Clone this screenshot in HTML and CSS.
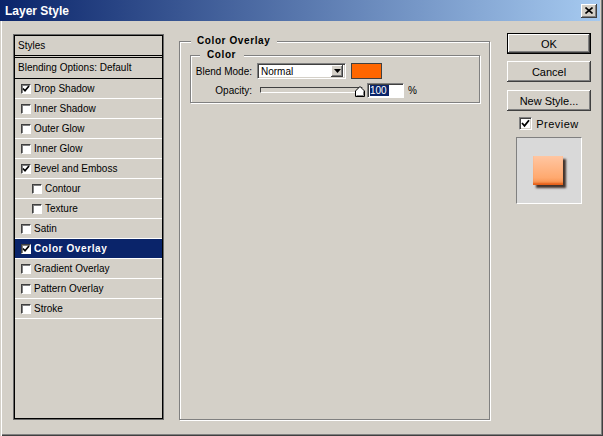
FILE: index.html
```html
<!DOCTYPE html>
<html lang="en">
<head>
    <meta charset="UTF-8">
    <title>Layer Style</title>
    <link rel="stylesheet" href="styles.css">
</head>
<body>
<div class="window">
    <div class="titlebar">
        <span class="title">Layer Style</span>
        <span class="close">
            <svg width="8" height="7" viewBox="0 0 8 7"><path d="M0.5 0.5 L7.5 6.5 M7.5 0.5 L0.5 6.5" stroke="#000" stroke-width="1.6"/></svg>
        </span>
    </div>
    <div class="content">
        <div class="styles-panel">
            <div class="panel-head">Styles</div>
            <div class="panel-blend">Blending Options: Default</div>
            <ul class="style-list">
                <li class="item"><span class="tick on"><svg width="8" height="8" viewBox="0 0 8 8"><path d="M1 3.5 L3 5.8 L7 1" fill="none" stroke="#000" stroke-width="1.7"/></svg></span>Drop Shadow</li>
                <li class="item"><span class="tick"></span>Inner Shadow</li>
                <li class="item"><span class="tick"></span>Outer Glow</li>
                <li class="item"><span class="tick"></span>Inner Glow</li>
                <li class="item"><span class="tick on"><svg width="8" height="8" viewBox="0 0 8 8"><path d="M1 3.5 L3 5.8 L7 1" fill="none" stroke="#000" stroke-width="1.7"/></svg></span>Bevel and Emboss</li>
                <li class="item sub"><span class="tick"></span>Contour</li>
                <li class="item sub"><span class="tick"></span>Texture</li>
                <li class="item"><span class="tick"></span>Satin</li>
                <li class="item active"><span class="tick on"><svg width="8" height="8" viewBox="0 0 8 8"><path d="M1 3.5 L3 5.8 L7 1" fill="none" stroke="#000" stroke-width="1.7"/></svg></span>Color Overlay</li>
                <li class="item"><span class="tick"></span>Gradient Overlay</li>
                <li class="item"><span class="tick"></span>Pattern Overlay</li>
                <li class="item"><span class="tick"></span>Stroke</li>
            </ul>
        </div>

        <div class="group outer">
            <span class="legend">Color Overlay</span>
            <div class="group inner">
                <span class="legend">Color</span>
                <div class="row">
                    <label class="field-label">Blend Mode:</label>
                    <div class="select">
                        <span class="select-value">Normal</span>
                        <span class="select-btn"><svg width="7" height="4" viewBox="0 0 7 4"><path d="M0 0 H7 L3.5 4 Z" fill="#000"/></svg></span>
                    </div>
                    <span class="swatch"></span>
                </div>
                <div class="row second">
                    <label class="field-label">Opacity:</label>
                    <div class="slider">
                        <span class="track"></span>
                        <svg class="thumb" width="10" height="11" viewBox="0 0 10 11"><path d="M0.5 10.5 V5 L5 0.5 L9.5 5 V10.5 Z" fill="#fff" stroke="#000"/><path d="M1.5 9.5 H8.5 V5.4" fill="none" stroke="#808080"/></svg>
                    </div>
                    <div class="number"><span class="sel">100</span></div>
                    <span class="unit">%</span>
                </div>
            </div>
        </div>

        <div class="actions">
            <div class="btn default"><span>OK</span></div>
            <div class="btn">Cancel</div>
            <div class="btn">New Style...</div>
            <div class="preview-row">
                <span class="box"><svg width="9" height="9" viewBox="0 0 9 9"><path d="M1 4 L3.5 6.8 L8 1.2" fill="none" stroke="#000" stroke-width="1.8"/></svg></span>
                <span>Preview</span>
            </div>
            <div class="preview">
                <span class="sample"></span>
            </div>
        </div>
    </div>
</div>
</body>
</html>
```

FILE: styles.css
```css
body { margin: 0; font-family: "Liberation Sans", Arial, sans-serif; background: #d4d0c8; color: #000; }
.window { width: 603px; height: 436px; box-sizing: border-box; background: #d4d0c8; box-shadow: inset 1px 0 #d4d0c8, inset 2px 0 #fff, inset -1px -1px #404040, inset -2px -2px #808080; }

.titlebar { height: 21px; width: 600px; box-sizing: border-box; padding: 0 3px 0 5px; display: flex; align-items: center; justify-content: space-between; background: linear-gradient(to right, #0a246a, #a6caf0); }
.title { color: #fff; font-weight: bold; font-size: 12px; }
.close { width: 16px; height: 14px; box-sizing: border-box; display: flex; align-items: center; justify-content: center; background: #d4d0c8; box-shadow: inset -1px -1px #404040, inset 1px 1px #fff, inset -2px -2px #808080; }

.content { display: flex; align-items: flex-start; padding: 12px 0 0 14px; }

/* styles list */
.styles-panel { width: 149px; height: 384px; margin-top: 2px; box-sizing: border-box; border: 1px solid #000; box-shadow: 0 0 0 1px #6b6b6b; font-size: 10px; }
.panel-head { height: 19px; line-height: 19px; padding-left: 3px; border-bottom: 1px solid #000; margin-bottom: 1px; }
.panel-blend { height: 20px; line-height: 20px; padding-left: 3px; border-top: 1px solid #000; border-bottom: 1px solid #000; }
.style-list { list-style: none; margin: 0; padding: 0; }
.item { height: 19px; border-bottom: 1px solid #fff; display: flex; align-items: center; padding-left: 6px; }
.item.sub { padding-left: 17px; }
.item.active { background: #0a246a; color: #fff; font-weight: bold; letter-spacing: 0.6px; }
.tick { width: 10px; height: 10px; box-sizing: border-box; margin-right: 3px; background: #fff; border-style: solid; border-width: 1px; border-color: #404040 #fff #fff #404040; box-shadow: inset 1px 1px #808080; display: flex; align-items: center; justify-content: center; }

/* etched groups */
.group { position: relative; box-sizing: border-box; border: 1px solid #808080; box-shadow: inset 1px 1px #fff, 1px 1px #fff; }
.outer { width: 311px; height: 379px; margin: 8px 0 0 16px; padding: 13px 0 0 10px; }
.inner { width: 290px; height: 48px; padding-top: 7px; }
.legend { position: absolute; top: -7px; left: 11px; padding: 0 7px 0 6px; line-height: 12px; background: #d4d0c8; font-size: 10px; font-weight: bold; letter-spacing: 0.6px; }
.inner .legend { left: 9px; padding: 0 8px 0 7px; }

.row { display: flex; align-items: center; height: 16px; font-size: 10px; }
.row.second { height: 15px; margin-top: 4px; }
.field-label { width: 61px; text-align: right; margin-right: 5px; }
.second .field-label { margin-right: 8px; }

.select { width: 89px; height: 16px; box-sizing: border-box; background: #fff; border: 1px solid; border-color: #808080 #fff #fff #808080; box-shadow: inset 1px 1px #404040, inset -1px -1px #d4d0c8; display: flex; align-items: center; justify-content: space-between; padding: 2px; }
.select-value { padding-left: 1px; }
.select-btn { width: 12px; height: 12px; box-sizing: border-box; background: #d4d0c8; box-shadow: inset -1px -1px #404040, inset 1px 1px #fff, inset -2px -2px #808080; display: flex; align-items: center; justify-content: center; }
.swatch { width: 31px; height: 16px; margin-left: 5px; box-sizing: border-box; border: 1px solid #404040; background: #ff6600; }

.slider { position: relative; width: 105px; height: 15px; }
.track { display: block; width: 103px; height: 6px; margin-top: 4px; box-sizing: border-box; border: 1px solid; border-color: #404040 #fff #fff #404040; background: #d4d0c8; }
.thumb { position: absolute; left: 95px; top: 3px; }
.number { width: 37px; height: 15px; margin-left: 2px; box-sizing: border-box; background: #fff; border: 1px solid; border-color: #808080 #fff #fff #808080; box-shadow: inset 1px 1px #404040; padding: 1px 0 0 2px; line-height: 12px; }
.sel { background: #0a246a; color: #fff; padding-right: 2px; }
.unit { margin-left: 4px; }

/* buttons */
.actions { width: 84px; margin-left: 17px; display: flex; flex-direction: column; align-items: center; font-size: 11px; }
.btn { width: 84px; height: 21px; box-sizing: border-box; display: flex; align-items: center; justify-content: center; background: #d4d0c8; box-shadow: inset -1px -1px #404040, inset 1px 1px #fff, inset -2px -2px #808080; margin-bottom: 7px; }
.btn + .btn + .btn { margin-top: 1px; margin-bottom: 0; }
.btn.default { border: 1px solid #000; box-shadow: inset -1px -1px #404040, inset 1px 1px #fff, inset -2px -2px #808080; }
.preview-row { display: flex; align-items: center; height: 13px; margin-top: 6px; letter-spacing: 0.5px; }
.box { width: 13px; height: 13px; box-sizing: border-box; margin-right: 4px; background: #fff; border: 1px solid; border-color: #808080 #fff #fff #808080; box-shadow: inset 1px 1px #404040, inset -1px -1px #d4d0c8; display: flex; align-items: center; justify-content: center; }
.preview { width: 66px; height: 67px; margin-top: 7px; box-sizing: border-box; border: 1px solid; border-color: #808080 #fff #fff #808080; background: #d9d9d9; padding: 18px 0 0 16px; }
.sample { display: block; width: 30px; height: 29px; background: linear-gradient(#ffc6a2, #ffa96f 75%, #f58a44); box-shadow: inset 0 -3px 2px -1px #e5601a, 3px 3px 2px rgba(30, 10, 0, 0.8); }
```
